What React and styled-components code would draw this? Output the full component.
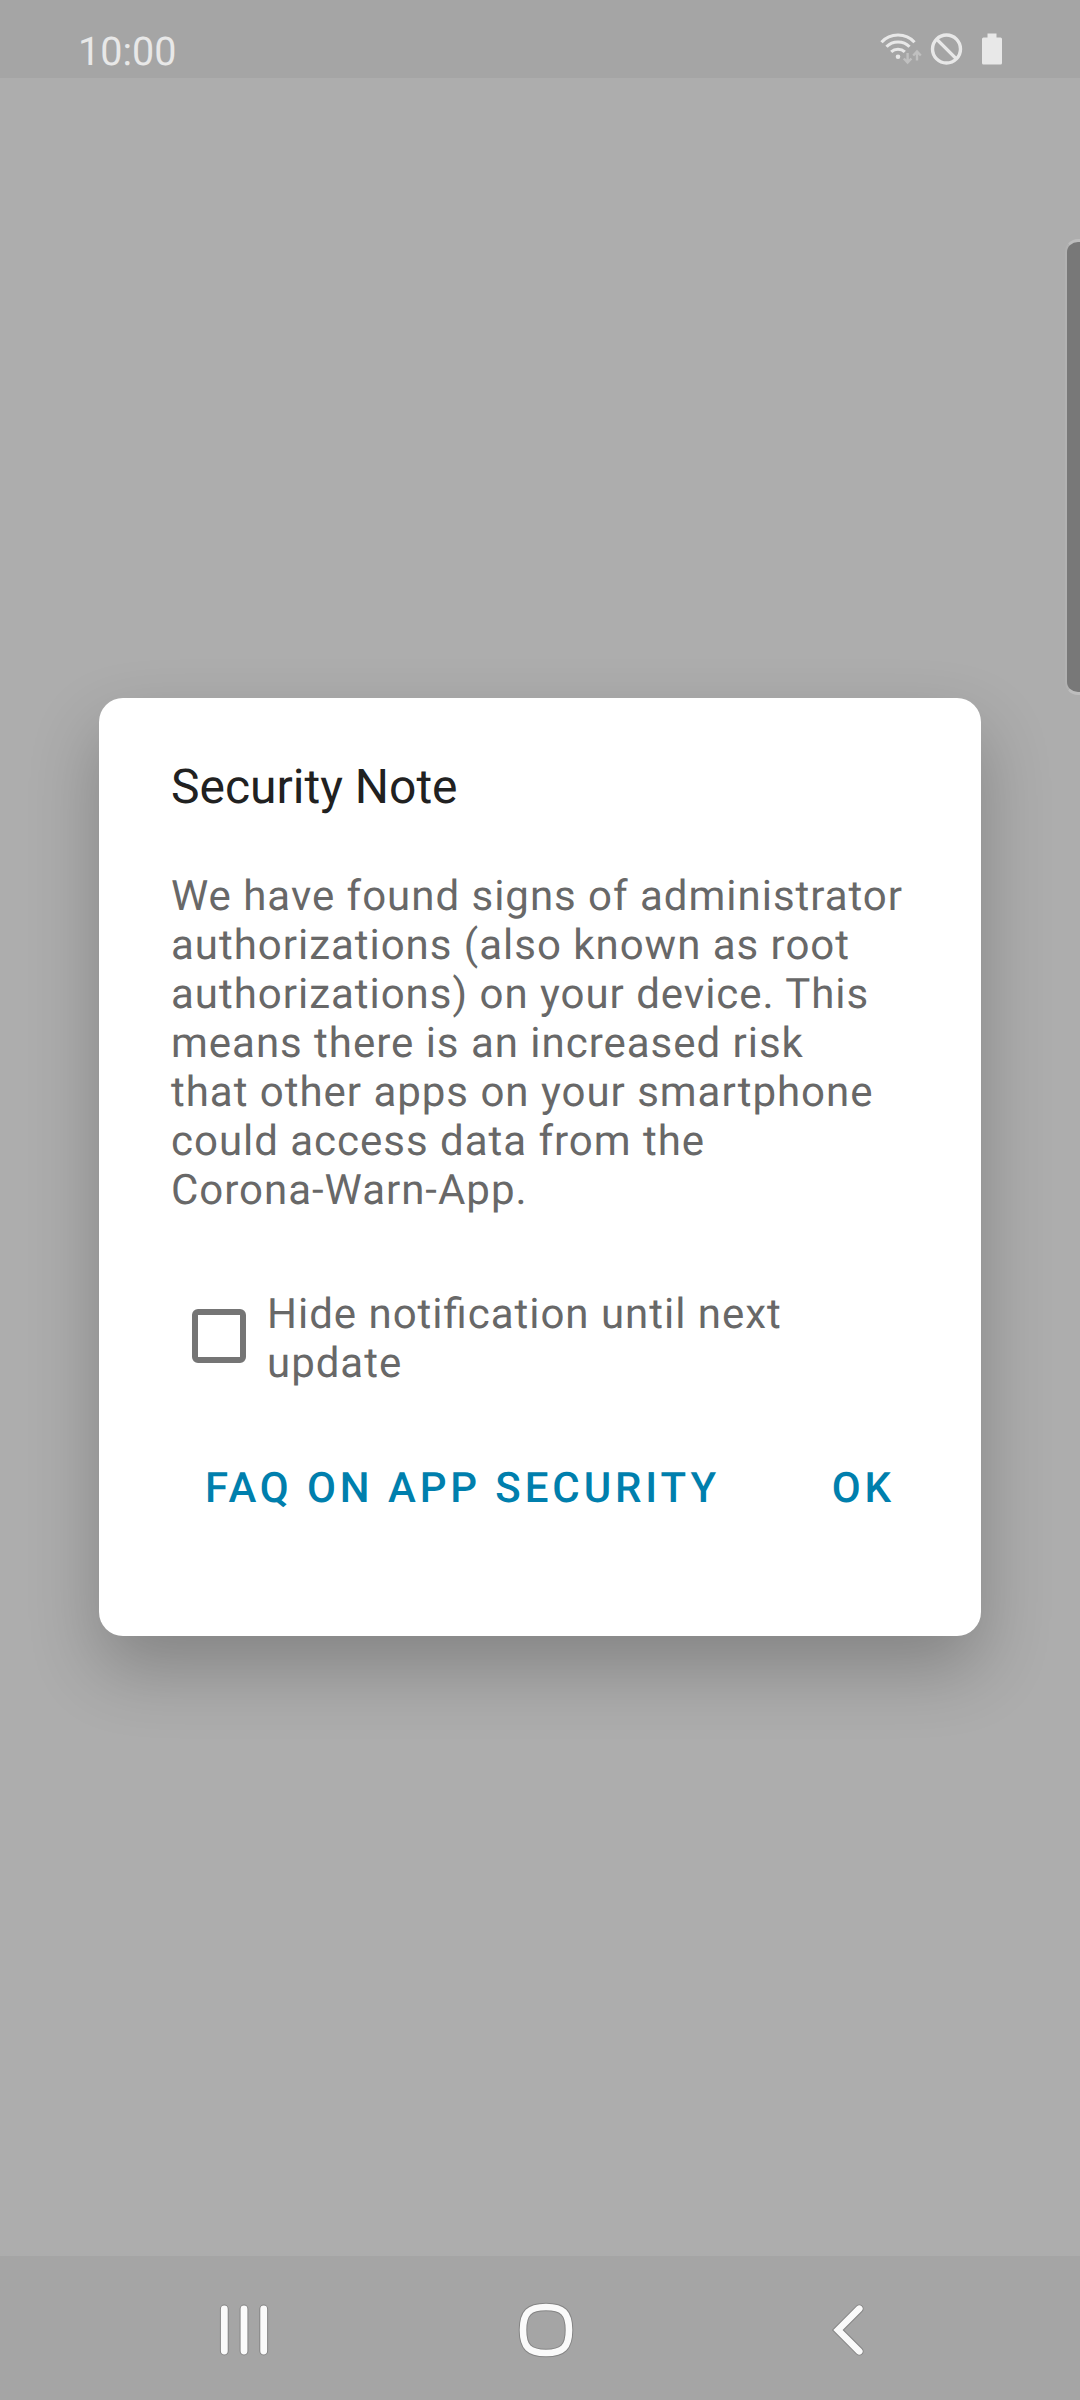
import React from "react";
import styled, { createGlobalStyle } from "styled-components";

const GlobalStyle = createGlobalStyle`
  html, body { margin: 0; padding: 0; background: #adadad; }
  * { box-sizing: border-box; }
`;

const Screen = styled.div`
  position: relative;
  display: flex;
  flex-direction: column;
  width: 1080px;
  height: 2400px;
  overflow: hidden;
  background: #adadad;
  font-family: Roboto, "Liberation Sans", sans-serif;
  text-rendering: geometricPrecision;
`;

const StatusBar = styled.header`
  display: flex;
  justify-content: space-between;
  height: 78px;
  padding: 28px 76px 0 78px;
  background: #a5a5a5;
`;

const Clock = styled.time`
  margin-top: 1px;
  font-size: 39.5px;
  line-height: 46px;
  color: #e8e8e8;
`;

const StatusIcons = styled.svg`
  width: 126px;
  height: 40px;
  margin-top: 2px;
`;

const Content = styled.main`
  flex: 1;
  display: flex;
  flex-direction: column;
  align-items: center;
  padding-top: 620px;
`;

const Dialog = styled.section`
  width: 882px;
  height: 938px;
  padding: 61px 72px 0;
  border-radius: 24px;
  background: #fff;
  box-shadow: 0 32px 70px rgba(0, 0, 0, 0.24);
`;

const Title = styled.h1`
  margin: 0 0 57px;
  font-size: 48px;
  font-weight: 400;
  line-height: 56px;
  color: #212121;
`;

const bodyText = `
  font-size: 42px;
  line-height: 49px;
  letter-spacing: 0.98px;
  font-feature-settings: "liga" 1;
  white-space: pre;
  color: #686868;
`;

const Message = styled.p`
  ${bodyText}
  margin: 0;
`;

const CheckRow = styled.label`
  display: flex;
  align-items: flex-start;
  margin-top: 75px;
  padding-left: 21px;
`;

const Checkbox = styled.span`
  flex: none;
  width: 54px;
  height: 54px;
  margin: 19px 21px 0 0;
  border: 6px solid #757575;
  border-radius: 6px;
`;

const CheckLabel = styled.span`
  ${bodyText}
`;

const Actions = styled.div`
  display: flex;
  justify-content: space-between;
  margin-top: 76px;
  padding: 0 14px 0 34px;
`;

const TextButton = styled.button`
  padding: 0;
  border: 0;
  background: none;
  font: 500 42px/49px Roboto, "Liberation Sans", sans-serif;
  letter-spacing: 3.9px;
  text-rendering: geometricPrecision;
  white-space: nowrap;
  color: #007fad;
`;

const EdgeHandle = styled.div`
  position: absolute;
  top: 239px;
  right: 0;
  width: 15px;
  height: 456px;
  border: solid #bdbdbd;
  border-width: 3px 0 3px 2px;
  border-left-color: #b2b2b2;
  border-radius: 13px 0 0 13px;
  background: #787878;
`;

const NavBar = styled.nav`
  display: flex;
  align-items: center;
  height: 144px;
  padding-left: 216px;
  background: #a5a5a5;
`;

const NavIcon = styled.svg`
  flex: none;
  width: 60px;
  height: 60px;
  margin-right: ${(p) => p.$after || 0}px;
  margin-top: 4px;
  fill: none;
  stroke-linecap: round;
`;

const Outlined = ({ d, width }) => (
  <>
    <path d={d} stroke="#858585" strokeWidth={width + 2} />
    <path d={d} stroke="#fafafa" strokeWidth={width} />
  </>
);

const MESSAGE = [
  "We have found signs of administrator",
  "authorizations (also known as root",
  "authorizations) on your device. This",
  "means there is an increased risk",
  "that other apps on your smartphone",
  "could access data from the",
  "Corona-Warn-App.",
].join("\n");

export default function App() {
  return (
    <Screen>
      <GlobalStyle />
      <StatusBar>
        <Clock>10:00</Clock>
        <StatusIcons viewBox="878 30 126 40" fill="none">
          <g stroke="#e8e8e8" strokeWidth="3.1">
            <path d="M881.5 42.2Q888 35 898 35T914.5 42.2" />
            <path d="M886.5 46.8Q891 42 898 42T909.5 46.8" />
            <path d="M891.2 51.8Q894 49.2 898 49.2T904.8 51.8" />
          </g>
          <circle cx="898" cy="56.7" r="2.3" fill="#e8e8e8" />
          <path d="M907.6 53v8M903.8 58.5l3.8 4 3.8-4M917 60.5v-8M913.2 55.5l3.8-4 3.8 4" stroke="#c0c0c0" strokeWidth="2.4" />
          <circle cx="946.5" cy="49" r="14" stroke="#e8e8e8" strokeWidth="3.4" />
          <path d="M936.6 39.1l19.8 19.8" stroke="#e8e8e8" strokeWidth="3.4" />
          <path d="M987.5 33.5h9v4h4q1.5 0 1.5 1.5v24q0 1.5-1.5 1.5h-17q-1.5 0-1.5-1.5v-24q0-1.5 1.5-1.5h4z" fill="#e8e8e8" />
        </StatusIcons>
      </StatusBar>

      <Content>
        <Dialog role="dialog">
          <Title>Security Note</Title>
          <Message>{MESSAGE}</Message>
          <CheckRow>
            <Checkbox />
            <CheckLabel>{"Hide notification until next\nupdate"}</CheckLabel>
          </CheckRow>
          <Actions>
            <TextButton>FAQ ON APP SECURITY</TextButton>
            <TextButton>OK</TextButton>
          </Actions>
        </Dialog>
      </Content>

      <NavBar>
        <NavIcon viewBox="0 0 60 60" $after={240}>
          <Outlined d="M8.3 9v42M28 9v42M47.7 9v42" width={6.8} />
        </NavIcon>
        <NavIcon viewBox="0 0 60 60" $after={246}>
          <Outlined d="M30 7C47 7 53 13 53 30S47 53 30 53S7 47 7 30S13 7 30 7Z" width={6.6} />
        </NavIcon>
        <NavIcon viewBox="0 0 60 60">
          <Outlined d="M37.3 8.7L16 30L37.3 51.3" width={6.6} />
        </NavIcon>
      </NavBar>
      <EdgeHandle />
    </Screen>
  );
}
